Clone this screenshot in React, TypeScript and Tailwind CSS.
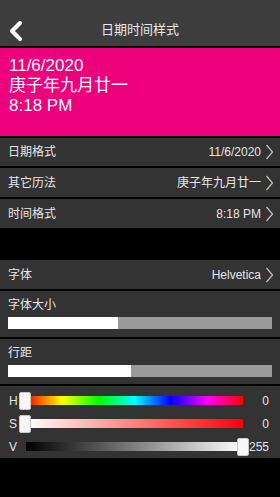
import { ChevronLeft } from "lucide-react";

function Chevron() {
  return (
    <svg width="9" height="16" viewBox="0 0 9 16" className="ml-[4px]">
      <polyline points="1.5,1 7.5,8 1.5,15" fill="none" stroke="#c4c4c4" strokeWidth="1.2" />
    </svg>
  );
}

function NavRow({ label, value, first }: { label: string; value: string; first?: boolean }) {
  return (
    <div className={`${first ? "h-[28px]" : "h-[29px]"} bg-[#333333] flex items-center justify-between pl-[8px] pr-[6px]`}>
      <span className="text-[12px] text-[#e6e6e6]">{label}</span>
      <span className="flex items-center text-[12px] text-[#e6e6e6]">
        {value}
        <Chevron />
      </span>
    </div>
  );
}

function BarRow({ label, pct, h }: { label: string; pct: number; h: string }) {
  return (
    <div className={`${h} bg-[#333333] pt-[6px] px-[8px]`}>
      <div className="text-[12px] leading-[16px] text-[#e6e6e6]">{label}</div>
      <div className="mt-[4px] h-[12px] bg-[#9a9a9a] flex">
        <div className="h-full bg-white" style={{ width: `${pct}%` }} />
      </div>
    </div>
  );
}

function SliderRow({ label, grad, pos, value }: { label: string; grad: string; pos: number; value: string }) {
  return (
    <div className="h-[23px] flex items-center">
      <span className="w-[19px] pl-[9px] text-[12px] text-[#e6e6e6]">{label}</span>
      <div className="relative w-[224px] h-[18px] flex items-center">
        <div className={`ml-[7px] w-[217px] h-[9px] ${grad}`} />
        <div
          className="absolute top-0 w-[12px] h-[18px] rounded-[2px] bg-[#f7f7f7] border border-[#c8c8c8]"
          style={{ left: `${pos}px` }}
        />
      </div>
      <span className="flex-1 text-right pr-[11px] text-[12px] text-[#e6e6e6]">{value}</span>
    </div>
  );
}

export default function App() {
  return (
    <div
      className="w-[280px] h-[497px] bg-black overflow-hidden flex flex-col"
      style={{ fontFamily: '"Liberation Sans", "Noto Sans CJK SC", sans-serif' }}
    >
      {/* Header */}
      <div className="relative h-[46px] bg-[#3d3d3d] flex items-center justify-center">
        <ChevronLeft size={32} strokeWidth={3} className="absolute left-[0px] top-[15px] text-white" />
        <span className="mt-[14px] text-[13px] text-[#e8e8e8]">日期时间样式</span>
      </div>

      {/* Preview */}
      <div className="mt-[2px] h-[88px] bg-[#ec007c] pl-[9px] pt-[8px] text-white text-[17px] leading-[20px]">
        <div>11/6/2020</div>
        <div>庚子年九月廿一</div>
        <div>8:18 PM</div>
      </div>

      <div className="mt-[2px] flex flex-col gap-[2px]">
        <NavRow first label="日期格式" value="11/6/2020" />
        <NavRow label="其它历法" value="庚子年九月廿一" />
        <NavRow label="时间格式" value="8:18 PM" />
      </div>

      <div className="mt-[32px] flex flex-col gap-[2px]">
        <NavRow label="字体" value="Helvetica" />
        <BarRow label="字体大小" pct={41.7} h="h-[46px]" />
        <BarRow label="行距" pct={46.6} h="h-[45px]" />
        <div className="h-[72px] bg-[#333333] pt-[3px]">
          <SliderRow
            label="H"
            grad="bg-[linear-gradient(to_right,#ff0000,#ffff00,#00ff00,#00ffff,#0000ff,#ff00ff,#ff0000)]"
            pos={0}
            value="0"
          />
          <SliderRow label="S" grad="bg-[linear-gradient(to_right,#ffffff,#ff0000)]" pos={0} value="0" />
          <SliderRow label="V" grad="bg-[linear-gradient(to_right,#000000,#ffffff)]" pos={218} value="255" />
        </div>
      </div>
    </div>
  );
}
